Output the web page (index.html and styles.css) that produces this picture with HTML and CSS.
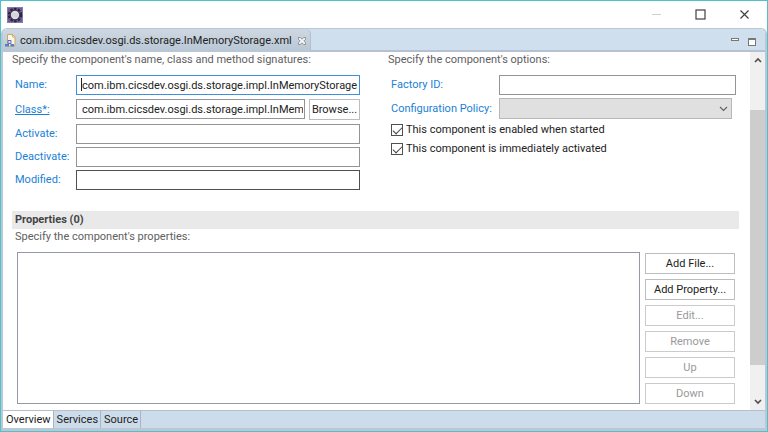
FILE: index.html
```html
<!DOCTYPE html>
<html lang="en">
<head>
<meta charset="utf-8">
<meta name="viewport" content="width=device-width, initial-scale=1">
<title>com.ibm.cicsdev.osgi.ds.storage.InMemoryStorage.xml</title>
<link rel="stylesheet" href="styles.css">
</head>
<body>
<div class="window">
  <header class="titlebar">
    <svg class="app-icon" width="16" height="16" viewBox="0 0 16 16" aria-hidden="true">
      <rect width="16" height="16" fill="#6b5f93"/>
      <rect x="0.5" y="0.5" width="15" height="15" fill="none" stroke="#8a7ba6"/>
      <circle cx="8" cy="8" r="6" fill="none" stroke="#2c2440" stroke-width="2.4" stroke-dasharray="2.4 1.4"/>
      <circle cx="8" cy="8" r="4.8" fill="#dcdce2" stroke="#3a3050" stroke-width="1.2"/>
      <path d="M4.5 7h7M4.5 9h7" stroke="#c3c3cb" stroke-width="0.6"/>
    </svg>
    <div class="window-buttons">
      <button type="button" aria-label="Minimize"><svg width="11" height="11" viewBox="0 0 11 11"><path d="M1 5.5h9" stroke="#cfcfcf"/></svg></button>
      <button type="button" aria-label="Maximize"><svg width="11" height="11" viewBox="0 0 11 11"><rect x="1" y="1" width="9" height="9" fill="none" stroke="#404040" stroke-width="1.2"/></svg></button>
      <button type="button" aria-label="Close"><svg width="11" height="11" viewBox="0 0 11 11"><path d="M1.5 1.5l8 8M9.5 1.5l-8 8" stroke="#404040" stroke-width="1.2"/></svg></button>
    </div>
  </header>

  <div class="editor">
    <div class="tabstrip">
      <div class="file-tab">
        <svg width="11" height="13" viewBox="0 0 11 13" aria-hidden="true">
          <path d="M2.5 0.5h5l2.5 2.5v9h-7.5z" fill="#fbf6e4" stroke="#c9a765"/>
          <path d="M7.5 0.5v2.5h2.5" fill="none" stroke="#c9a765" stroke-width="0.8"/>
          <path d="M3 6.5h3v3h-3z" fill="#dfe6f5" stroke="#5272b8"/>
          <path d="M0 10h4v2.500h-4zM5.500 10h3.500v2.500h-3.500z" fill="#5b7cc0"/>
        </svg>
        <span>com.ibm.cicsdev.osgi.ds.storage.InMemoryStorage.xml</span>
        <button class="tab-close" type="button" aria-label="Close editor">
          <svg width="8" height="8" viewBox="0 0 9 9"><path d="M0.5 0.5h2l2 2 2-2h2v2l-2 2 2 2v2h-2l-2-2-2 2h-2v-2l2-2-2-2z" fill="#f5f7f9" stroke="#7a7d82" stroke-width="0.9"/></svg>
        </button>
      </div>
      <div class="view-buttons">
        <button type="button" aria-label="Minimize view"><svg width="8" height="8" viewBox="0 0 8 8"><rect x="0.5" y="0.5" width="7" height="2" fill="#fff" stroke="#777"/></svg></button>
        <button type="button" aria-label="Maximize view"><svg width="8" height="8" viewBox="0 0 8 8"><rect x="0.5" y="0.5" width="7" height="7" fill="#fff" stroke="#777"/><path d="M0 1.5h8" stroke="#777"/></svg></button>
      </div>
    </div>

    <div class="body">
      <main class="form">
        <div class="columns">
          <section>
            <p class="hint">Specify the component's name, class and method signatures:</p>
            <div class="fields">
              <label for="name">Name:</label>
              <div class="name-box"><input class="focused" id="name" value="com.ibm.cicsdev.osgi.ds.storage.impl.InMemoryStorage"></div>
              <label for="class"><a href="#class">Class*:</a></label>
              <div class="class-row">
                <input id="class" value="com.ibm.cicsdev.osgi.ds.storage.impl.InMemoryStorage">
                <button class="button" type="button">Browse...</button>
              </div>
              <label for="activate">Activate:</label>
              <input id="activate">
              <label for="deactivate">Deactivate:</label>
              <input id="deactivate">
              <label for="modified">Modified:</label>
              <input class="hot" id="modified">
            </div>
          </section>

          <section>
            <p class="hint">Specify the component's options:</p>
            <div class="fields options">
              <label for="factory">Factory ID:</label>
              <input id="factory">
              <label for="policy">Configuration Policy:</label>
              <div class="select-box">
                <select id="policy"><option></option></select>
                <svg width="9" height="6" viewBox="0 0 9 6" aria-hidden="true"><path d="M1 1l3.5 3.5L8 1" fill="none" stroke="#606060" stroke-width="1.1"/></svg>
              </div>
            </div>
            <div class="checks">
              <label><input type="checkbox" checked>This component is enabled when started</label>
              <label><input type="checkbox" checked>This component is immediately activated</label>
            </div>
          </section>
        </div>

        <section class="properties">
          <h2>Properties (0)</h2>
          <p class="hint">Specify the component's properties:</p>
          <div class="property-row">
            <div class="property-list" role="listbox" aria-label="Properties"></div>
            <div class="actions">
              <button class="button" type="button">Add File...</button>
              <button class="button" type="button">Add Property...</button>
              <button class="button" type="button" disabled>Edit...</button>
              <button class="button" type="button" disabled>Remove</button>
              <button class="button" type="button" disabled>Up</button>
              <button class="button" type="button" disabled>Down</button>
            </div>
          </div>
        </section>
      </main>

      <div class="scrollbar" aria-hidden="true">
        <svg width="8" height="6" viewBox="0 0 8 6"><path d="M1 5l3-3 3 3" fill="none" stroke="#505050" stroke-width="1.7"/></svg>
        <div class="track"><div class="thumb"></div></div>
        <svg width="8" height="6" viewBox="0 0 8 6"><path d="M1 1l3 3 3-3" fill="none" stroke="#505050" stroke-width="1.7"/></svg>
      </div>
    </div>

    <nav class="pages">
      <button class="current" type="button">Overview</button>
      <button type="button">Services</button>
      <button type="button">Source</button>
    </nav>
  </div>
</div>
</body>
</html>
```

FILE: styles.css
```css
* {
  box-sizing: border-box;
}

body {
  margin: 0;
  font-family: Roboto, "Liberation Sans", sans-serif;
  font-size: 11px;
  line-height: 16px;
  color: #222;
}

button,
input,
select {
  margin: 0;
  font: inherit;
  color: inherit;
}

button {
  padding: 0;
  border: 0;
  background: none;
}

svg {
  display: block;
}

.window {
  display: flex;
  flex-direction: column;
  min-height: 100vh;
  border: 1px solid #4fc1cb;
  background: #fff;
}

.titlebar {
  display: flex;
  align-items: center;
  justify-content: space-between;
  height: 27px;
  padding: 0 17px 0 6px;
}

.window-buttons {
  display: flex;
  gap: 33px;
}

.editor {
  display: flex;
  flex: 1;
  flex-direction: column;
  border: solid #bcc7d4;
  border-width: 1px 2px;
  border-radius: 6px 6px 0 0;
  background: #fff;
}

.tabstrip {
  display: flex;
  justify-content: space-between;
  height: 23px;
  border-bottom: 2px solid #b5c0d3;
  border-radius: 5px 5px 0 0;
  background: #cfdfee;
}

.file-tab {
  display: flex;
  align-items: center;
  gap: 4px;
  height: 23px;
  padding: 0 4px 0 2px;
  border-right: 1px solid #b3bfce;
  border-radius: 5px 5px 0 0;
  background: linear-gradient(#ced8e1, #b8c6d5);
}

.tab-close {
  margin-left: 2px;
}

.view-buttons {
  display: flex;
  gap: 9px;
  padding: 5px 9px 0 0;
}

.body {
  display: flex;
  flex: 1;
}

.form {
  flex: 1;
  padding: 0 11px 5px 9px;
}

.columns {
  display: grid;
  grid-template-columns: 1fr 1fr;
  gap: 28px;
  padding-right: 3px;
}

.hint {
  margin: 0;
  color: #606060;
}

.fields {
  display: grid;
  grid-template-columns: 61px 1fr;
  gap: 3px 0;
  align-items: center;
  padding: 7px 0 0 3px;
  color: #1b7fd6;
}

.fields.options {
  grid-template-columns: 108px 1fr;
}

.fields label {
  white-space: nowrap;
}

.fields a {
  color: inherit;
}

.fields input {
  width: 100%;
  min-width: 0;
  height: 20px;
  padding: 0 1px 0 5px;
  border: 1px solid #949494;
  background: #fff;
  color: #222;
}

.fields .focused {
  border-color: #3f8fdc;
  outline: 0;
}

.fields .hot {
  border-color: #505050;
}

.name-box {
  position: relative;
}

.name-box::before {
  content: "";
  position: absolute;
  top: 3px;
  left: 5px;
  width: 1px;
  height: 13px;
  background: #222;
}

.class-row {
  display: flex;
  gap: 4px;
  padding: 1px 0;
}

.button {
  height: 21px;
  border: 1px solid #bdbdbd;
  background: #fff;
  color: #222;
}

.class-row .button {
  flex: none;
  width: 51px;
}

.button:disabled {
  border-color: #cbcbcb;
  color: #999;
}

.select-box {
  position: relative;
  padding-right: 4px;
}

.select-box select {
  display: block;
  width: 100%;
  height: 21px;
  border: 1px solid #b8b8b8;
  border-radius: 0;
  background: #e0e0e0;
  appearance: none;
}

.select-box svg {
  position: absolute;
  top: 8px;
  right: 8px;
  pointer-events: none;
}

.checks {
  display: grid;
  gap: 3px;
  padding: 3px 0 0 3px;
}

.checks label {
  display: flex;
  align-items: center;
  gap: 3px;
}

.checks input {
  width: 12px;
  height: 12px;
  border: 1px solid #505050;
  background: #fff;
  appearance: none;
}

.checks input:checked::before {
  content: "";
  display: block;
  width: 8px;
  height: 4px;
  margin: 2px 1px;
  border: solid #404040;
  border-width: 0 0 1px 1px;
  transform: rotate(-45deg);
}

.properties {
  padding-top: 21px;
}

.properties h2 {
  margin: 0;
  padding: 1px 3px;
  background: #e9e9e9;
  color: #444;
  font-size: 11px;
  line-height: 16px;
}

.properties .hint {
  padding-left: 3px;
}

.property-row {
  display: flex;
  gap: 5px;
  padding: 7px 4px 0 5px;
}

.property-list {
  flex: 1;
  border: 1px solid #949aa3;
}

.actions {
  display: grid;
  gap: 5px;
  width: 90px;
  padding-top: 1px;
}

.scrollbar {
  display: flex;
  flex-direction: column;
  align-items: center;
  width: 15px;
  padding: 5px 0;
  background: #f0f0f0;
}

.track {
  flex: 1;
  width: 100%;
  padding: 47px 0 34px;
}

.thumb {
  height: 100%;
  background: #cdcdcd;
}

.pages {
  display: flex;
  height: 20px;
  border-top: 1px solid #b5c0cf;
  border-bottom: 2px solid #bcc7d4;
  background: #cddceb;
}

.pages button {
  padding: 0 2px 0 3px;
  border-right: 1px solid #a9b4c4;
}

.pages .current {
  background: #fff;
}
```
